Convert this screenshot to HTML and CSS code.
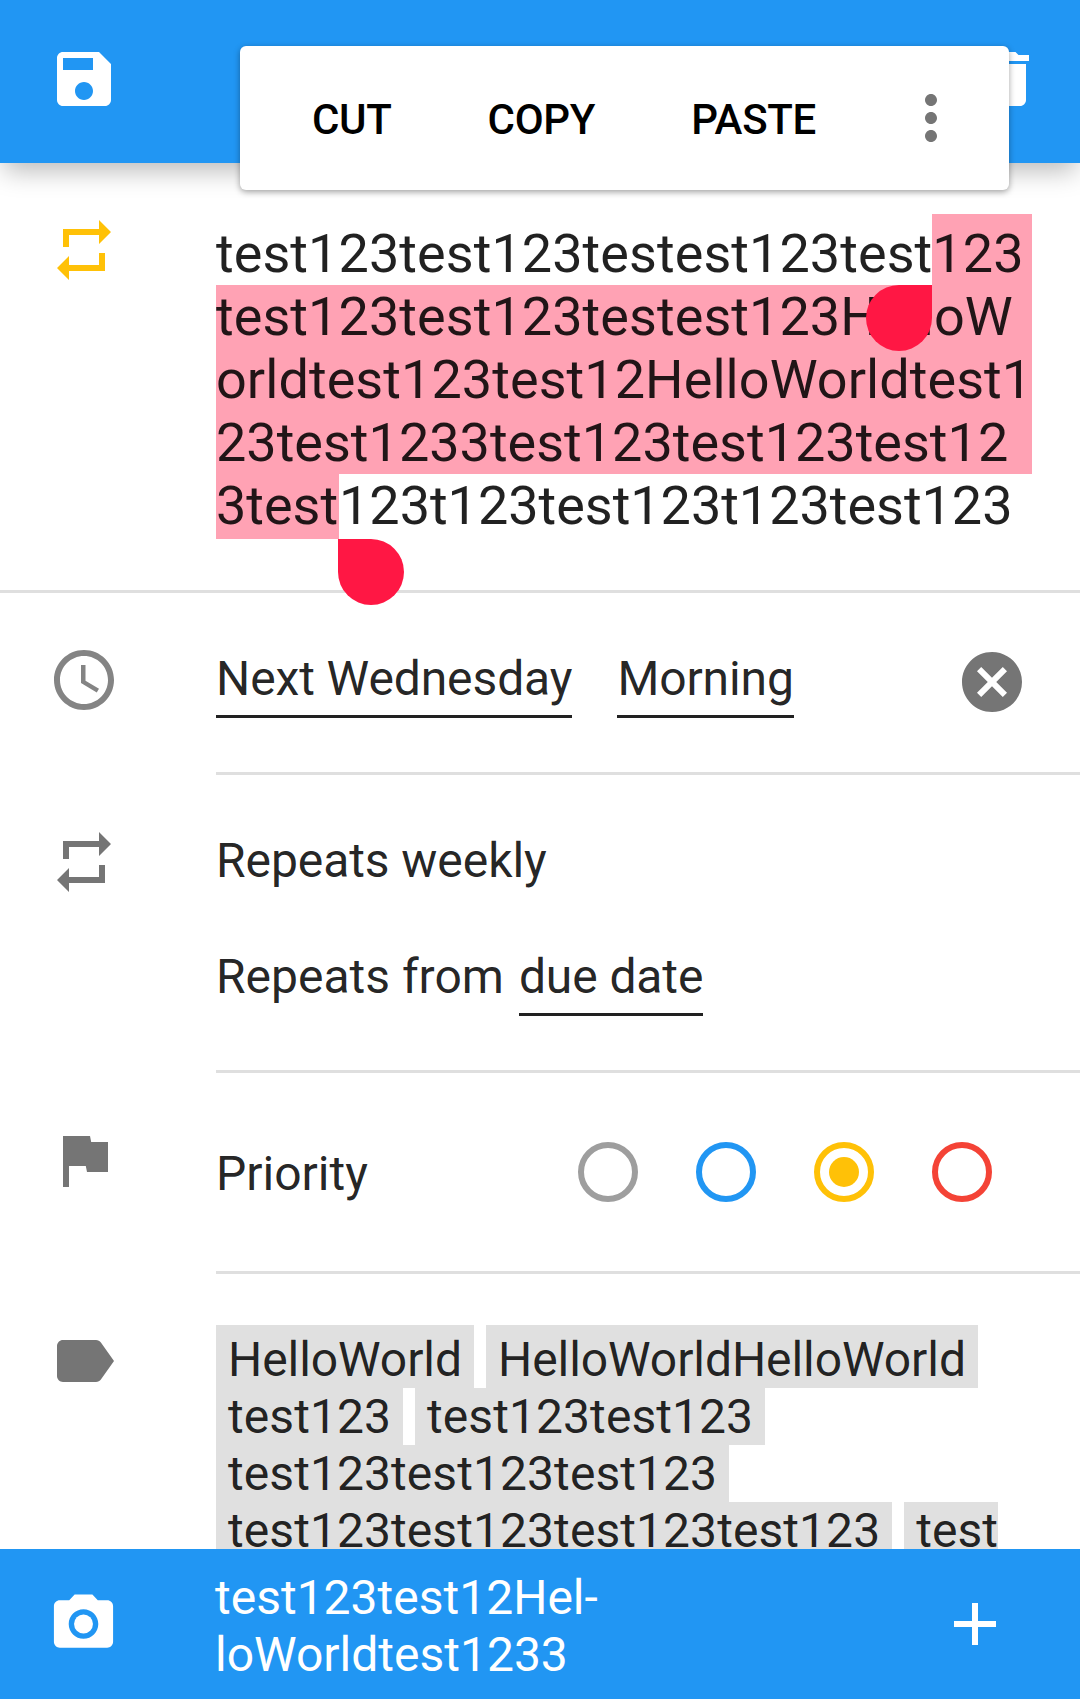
FILE: index.html
```html
<!DOCTYPE html>
<html lang="en">
<head>
<meta charset="utf-8">
<title>Edit task</title>
<link rel="stylesheet" href="styles.css">
</head>
<body>
<div class="app">
  <header class="toolbar">
    <svg class="icon" viewBox="0 0 24 24"><path d="M17 3H5c-1.11 0-2 .9-2 2v14c0 1.1.89 2 2 2h14c1.1 0 2-.9 2-2V7l-4-4zm-5 16c-1.66 0-3-1.34-3-3s1.34-3 3-3 3 1.34 3 3-1.34 3-3 3zm3-10H5V5h10v4z"/></svg>
    <svg class="icon" viewBox="0 0 24 24"><path d="M6 19c0 1.1.9 2 2 2h8c1.1 0 2-.9 2-2V7H6v12zM19 4h-3.5l-1-1h-5l-1 1H5v2h14V4z"/></svg>
    <div class="popup">
      <span class="action cut">CUT</span>
      <span class="action copy">COPY</span>
      <span class="action paste">PASTE</span>
      <svg class="more" viewBox="0 0 24 24"><path d="M12 8c1.1 0 2-.9 2-2s-.9-2-2-2-2 .9-2 2 .9 2 2 2zm0 2c-1.1 0-2 .9-2 2s.9 2 2 2 2-.9 2-2-.9-2-2-2zm0 6c-1.1 0-2 .9-2 2s.9 2 2 2 2-.9 2-2-.9-2-2-2z"/></svg>
    </div>
  </header>

  <main class="content">
    <section class="row title-row">
      <svg class="icon amber" viewBox="0 0 24 24"><path d="M7 7h10v3l4-4-4-4v3H5v6h2V7zm10 10H7v-3l-4 4 4 4v-3h12v-6h-2v4z"/></svg>
      <div class="title">
        <div class="line first"><span>test123test123testest123test</span><span class="selected grow">123</span></div>
        <div class="line selected raised">test123test123testest123HelloW<i class="handle start"></i></div>
        <div class="line selected">orldtest123test12HelloWorldtest1</div>
        <div class="line selected fourth">23test1233test123test123test12</div>
        <div class="line last"><span class="selected tail">3test<i class="handle end"></i></span><span>123t123test123t123test123</span></div>
      </div>
    </section>

    <section class="row">
      <svg class="icon clock" viewBox="0 0 24 24"><path d="M11.99 2C6.47 2 2 6.48 2 12s4.47 10 9.99 10C17.52 22 22 17.52 22 12S17.52 2 11.99 2zM12 20c-4.42 0-8-3.58-8-8s3.58-8 8-8 8 3.58 8 8-3.58 8-8 8zM12.5 7H11v6l5.25 3.15.75-1.23-4.5-2.67z"/></svg>
      <div class="cell due">
        <span class="underlined">Next Wednesday</span>
        <span class="underlined">Morning</span>
        <svg class="clear" viewBox="0 0 24 24"><path d="M12 2C6.47 2 2 6.47 2 12s4.47 10 10 10 10-4.47 10-10S17.53 2 12 2zm5 13.59L15.59 17 12 13.41 8.41 17 7 15.59 10.59 12 7 8.41 8.41 7 12 10.59 15.59 7 17 8.41 13.41 12 17 15.59z"/></svg>
      </div>
    </section>

    <section class="row">
      <svg class="icon" viewBox="0 0 24 24"><path d="M7 7h10v3l4-4-4-4v3H5v6h2V7zm10 10H7v-3l-4 4 4 4v-3h12v-6h-2v4z"/></svg>
      <div class="cell repeat">
        <div class="weekly">Repeats weekly</div>
        <div class="from"><span>Repeats from</span><span class="underlined">due date</span></div>
      </div>
    </section>

    <section class="row">
      <svg class="icon" viewBox="0 0 24 24"><path d="M14.4 6L14 4H5v17h2v-7h5.6l.4 2h7V6z"/></svg>
      <div class="cell priority">
        <span class="name">Priority</span>
        <div class="radios">
          <i class="radio none"></i>
          <i class="radio low"></i>
          <i class="radio medium"></i>
          <i class="radio high"></i>
        </div>
      </div>
    </section>

    <section class="row">
      <svg class="icon" viewBox="0 0 24 24"><path d="M17.63 5.84C17.27 5.33 16.67 5 16 5L5 5.01C3.9 5.01 3 5.9 3 7v10c0 1.1.9 1.99 2 1.99L16 19c.67 0 1.27-.33 1.63-.84L22 12l-4.37-6.16z"/></svg>
      <div class="tags">
        <div class="tag-line first"><span class="tag">HelloWorld</span><span class="tag">HelloWorldHelloWorld</span></div>
        <div class="tag-line"><span class="tag">test123</span><span class="tag">test123test123</span></div>
        <div class="tag-line"><span class="tag">test123test123test123</span></div>
        <div class="tag-line"><span class="tag">test123test123test123test123</span><span class="tag broken">test</span></div>
      </div>
    </section>
  </main>

  <footer class="bottom-bar">
    <svg class="icon camera" viewBox="0 0 24 24"><circle cx="12" cy="12" r="3.2"/><path d="M9 2L7.17 4H4c-1.1 0-2 .9-2 2v12c0 1.1.9 2 2 2h16c1.1 0 2-.9 2-2V6c0-1.1-.9-2-2-2h-3.17L15 2H9zm3 15c-2.76 0-5-2.24-5-5s2.24-5 5-5 5 2.24 5 5-2.24 5-5 5z"/></svg>
    <div class="comment">test123test12Hel-<br>loWorldtest1233</div>
    <svg class="icon" viewBox="0 0 24 24"><path d="M19 13h-6v6h-2v-6H5v-2h6V5h2v6h6v2z"/></svg>
  </footer>
</div>
</body>
</html>
```

FILE: styles.css
```css
* { box-sizing: border-box; }

body {
  margin: 0;
  background: #fff;
  font-family: Roboto, sans-serif;
  font-size: 48px;
  line-height: 57px;
  color: rgba(0, 0, 0, .87);
}

.app {
  display: flex;
  flex-direction: column;
  height: 1699px;
  overflow: hidden;
}

.icon {
  display: block;
  flex: none;
  width: 72px;
  height: 72px;
  fill: #757575;
}

/* Toolbar */
.toolbar {
  position: relative;
  z-index: 1;
  flex: none;
  display: flex;
  justify-content: space-between;
  height: 163px;
  padding: 43px 36px 0 48px;
  background: #2196f3;
  box-shadow: 0 12px 24px -4px rgba(0, 0, 0, .27);
}
.toolbar > .icon { fill: #fff; }

.popup {
  position: absolute;
  left: 240px;
  top: 46px;
  display: flex;
  align-items: center;
  width: 769px;
  height: 144px;
  padding-left: 72px;
  border-radius: 6px;
  background: #fff;
  box-shadow: 0 2px 6px rgba(0, 0, 0, .36);
  color: #000;
}
.action {
  font-size: 42px;
  font-weight: 500;
  line-height: 49px;
  padding-top: 2px;
  letter-spacing: -.3px;
}
.copy, .paste { margin-left: 96px; }
.more {
  width: 72px;
  height: 72px;
  margin-left: auto;
  margin-right: 42px;
  fill: #757575;
}

/* Rows */
.content {
  flex: 1;
  min-height: 0;
  overflow: hidden;
}
.row {
  display: grid;
  grid-template-columns: 216px 1fr;
}
.row > .icon { margin: 51px 0 0 48px; }
.row > .amber { fill: #ffc107; }
.row > .clock { fill: #848484; }
.cell { border-bottom: 3px solid #dfdfdf; }

.underlined {
  padding-bottom: 8px;
  border-bottom: 3px solid #212121;
  letter-spacing: -.1px;
}

/* Title with its selection */
.title-row {
  height: 430px;
  border-bottom: 3px solid #dfdfdf;
}
.title {
  width: 816px;
  padding-top: 51px;
  font-size: 54px;
  line-height: 63px;
  letter-spacing: .06px;
  white-space: nowrap;
}
.line { position: relative; }
.raised { z-index: 1; }
.fourth { letter-spacing: 0; }
.first, .last { display: flex; }
.last { letter-spacing: -.03px; }
.line.first > span { padding-top: 8px; }
.selected { background: #ffa2b4; }
.grow { flex: 1; }
.tail {
  position: relative;
  width: 123px;
  padding-bottom: 2px;
}
.handle {
  position: absolute;
  width: 66px;
  height: 66px;
  background: #ff1744;
}
.start {
  left: 650px;
  top: 0;
  border-radius: 50% 0 50% 50%;
}
.end {
  left: 122px;
  top: 65px;
  border-radius: 0 50% 50% 50%;
}

/* Due date */
.due {
  display: flex;
  align-items: flex-start;
  gap: 45px;
  height: 182px;
  padding: 57px 52px 0 0;
}
.clear {
  width: 72px;
  height: 72px;
  margin: -4px 0 0 auto;
  fill: #757575;
}

/* Repeat */
.repeat {
  display: flex;
  flex-direction: column;
  gap: 59px;
  height: 298px;
  padding-top: 57px;
}
.weekly { letter-spacing: -.07px; }
.from {
  display: flex;
  gap: 15px;
}

/* Priority */
.priority {
  display: flex;
  justify-content: space-between;
  align-items: flex-start;
  height: 201px;
  padding: 69px 88px 0 0;
}
.name { padding-top: 3px; }
.radios {
  display: flex;
  gap: 58px;
}
.radio {
  width: 60px;
  height: 60px;
  border: 6px solid;
  border-radius: 50%;
}
.none { color: #9e9e9e; }
.low { color: #2196f3; }
.medium {
  color: #ffc107;
  padding: 9px;
  background: currentColor content-box;
}
.high { color: #f44336; }

/* Tags */
.tags { padding-top: 51px; }
.tag-line {
  display: flex;
  gap: 12px;
  letter-spacing: .07px;
  white-space: nowrap;
}
.tag-line.first { letter-spacing: -.07px; }
.tag {
  padding: 0 12px;
  background: #e0e0e0;
}
.tag-line.first .tag { padding-top: 6px; }
.tag.broken { padding-right: 0; }

/* Bottom bar */
.bottom-bar {
  flex: none;
  display: flex;
  height: 150px;
  padding: 20px 69px 0 48px;
  background: #2196f3;
  color: #fff;
}
.bottom-bar .icon {
  margin-top: 19px;
  fill: #fff;
}
.bottom-bar .camera { width: 71px; }
.comment {
  flex: 1;
  padding-left: 96px;
}
```
